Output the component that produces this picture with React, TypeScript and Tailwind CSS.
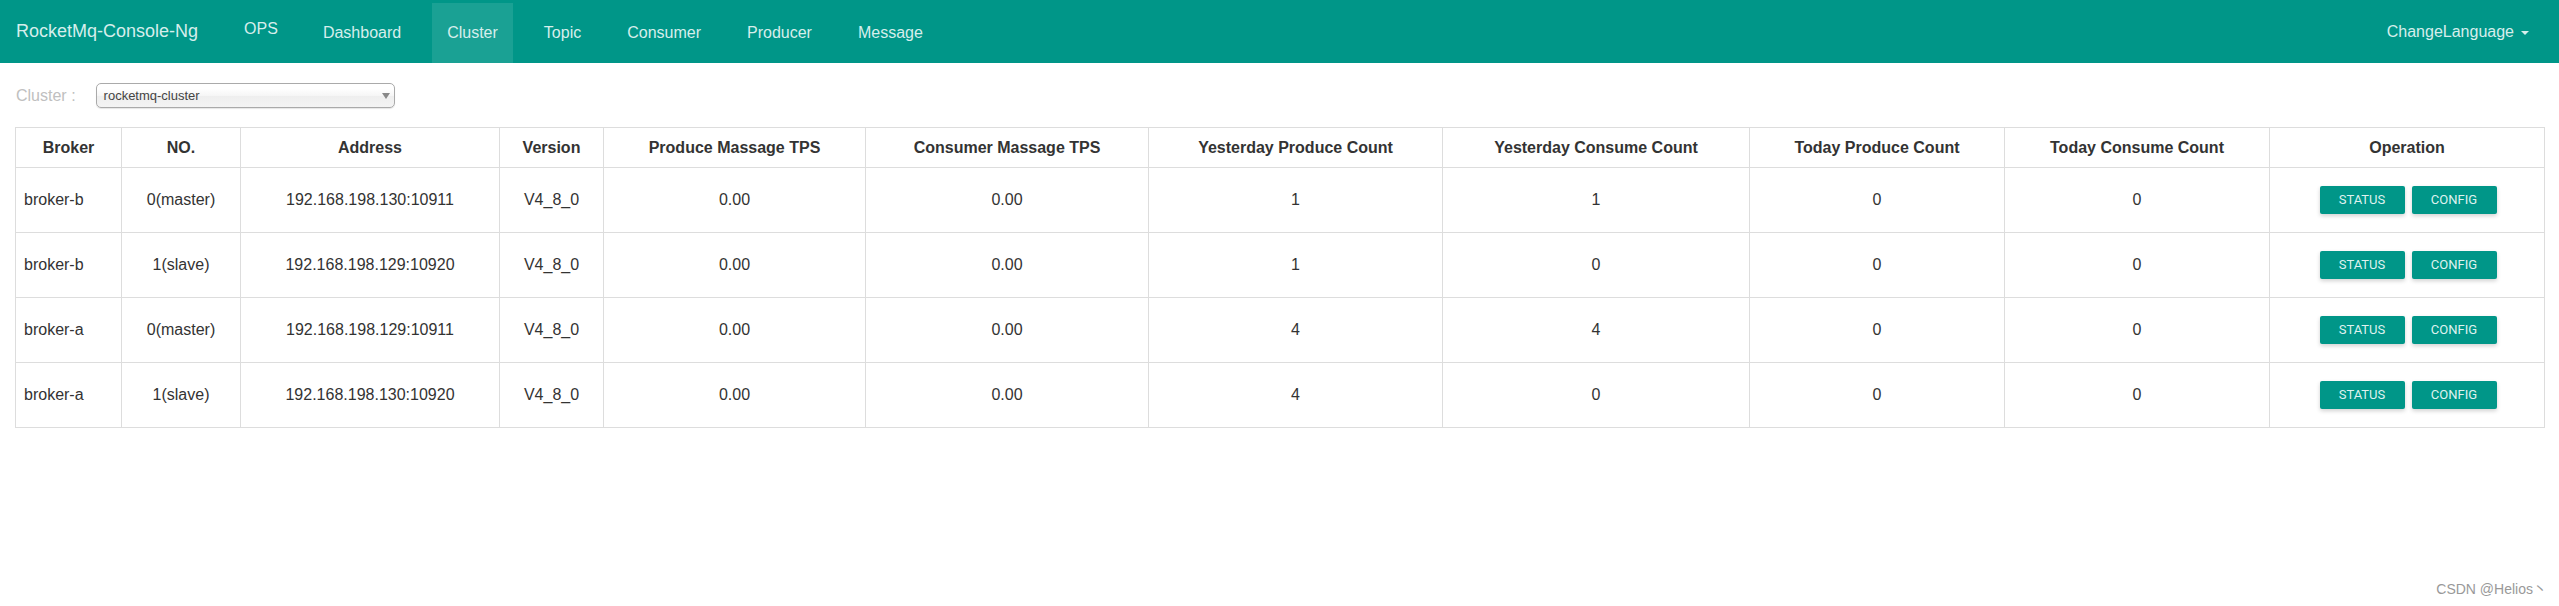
import React from "react";

type BrokerRow = {
  broker: string;
  no: string;
  address: string;
  version: string;
  produceTps: string;
  consumeTps: string;
  yesterdayProduce: number;
  yesterdayConsume: number;
  todayProduce: number;
  todayConsume: number;
};

const rows: BrokerRow[] = [
  {
    broker: "broker-b",
    no: "0(master)",
    address: "192.168.198.130:10911",
    version: "V4_8_0",
    produceTps: "0.00",
    consumeTps: "0.00",
    yesterdayProduce: 1,
    yesterdayConsume: 1,
    todayProduce: 0,
    todayConsume: 0,
  },
  {
    broker: "broker-b",
    no: "1(slave)",
    address: "192.168.198.129:10920",
    version: "V4_8_0",
    produceTps: "0.00",
    consumeTps: "0.00",
    yesterdayProduce: 1,
    yesterdayConsume: 0,
    todayProduce: 0,
    todayConsume: 0,
  },
  {
    broker: "broker-a",
    no: "0(master)",
    address: "192.168.198.129:10911",
    version: "V4_8_0",
    produceTps: "0.00",
    consumeTps: "0.00",
    yesterdayProduce: 4,
    yesterdayConsume: 4,
    todayProduce: 0,
    todayConsume: 0,
  },
  {
    broker: "broker-a",
    no: "1(slave)",
    address: "192.168.198.130:10920",
    version: "V4_8_0",
    produceTps: "0.00",
    consumeTps: "0.00",
    yesterdayProduce: 4,
    yesterdayConsume: 0,
    todayProduce: 0,
    todayConsume: 0,
  },
];

const columns = [
  { title: "Broker", width: "w-[106px]" },
  { title: "NO.", width: "w-[119px]" },
  { title: "Address", width: "w-[259px]" },
  { title: "Version", width: "w-[104px]" },
  { title: "Produce Massage TPS", width: "w-[262px]" },
  { title: "Consumer Massage TPS", width: "w-[283px]" },
  { title: "Yesterday Produce Count", width: "w-[294px]" },
  { title: "Yesterday Consume Count", width: "w-[307px]" },
  { title: "Today Produce Count", width: "w-[255px]" },
  { title: "Today Consume Count", width: "w-[265px]" },
  { title: "Operation", width: "w-[275px]" },
];

const navLinks = ["Dashboard", "Cluster", "Topic", "Consumer", "Producer", "Message"];

function NavBar() {
  return (
    <nav className="flex h-[63px] items-stretch bg-[#009688] pl-4 pr-[15px] text-[#d6eeec]">
      <a className="flex items-center text-[18px]">RocketMq-Console-Ng</a>
      <a className="ml-[46px] flex items-center pb-[6px] text-[16px]">OPS</a>
      <ul className="ml-[30px] flex items-stretch gap-4 text-[16px]">
        {navLinks.map((link) => (
          <li key={link} className="flex">
            <a
              className={
                link === "Cluster"
                  ? "mt-[3px] flex items-center bg-white/10 px-[15px]"
                  : "mt-[3px] flex items-center px-[15px]"
              }
            >
              {link}
            </a>
          </li>
        ))}
      </ul>
      <a className="ml-auto flex items-center px-[15px] text-[16px]">
        ChangeLanguage
        <span className="ml-[7px] mt-[2px] inline-block h-0 w-0 border-x-4 border-t-4 border-x-transparent border-t-[#d6eeec]" />
      </a>
    </nav>
  );
}

function ClusterSelect() {
  return (
    <div className="mt-5 flex items-center">
      <label className="pl-px text-[16px] text-[#c0c0c0]">Cluster :</label>
      <div className="ml-[20px] flex h-[25px] w-[299px] items-center justify-between rounded-[5px] border border-[#aaa] bg-[linear-gradient(#fff_20%,#f6f6f6_50%,#eee_52%,#f4f4f4_100%)] pl-[7px] pr-[4px] shadow-[0_1px_1px_rgba(0,0,0,0.1)]">
        <span className="text-[13px] text-[#444]">rocketmq-cluster</span>
        <span className="h-0 w-0 border-x-4 border-t-[6px] border-x-transparent border-t-[#888]" />
      </div>
    </div>
  );
}

function OpButton({ label }: { label: string }) {
  return (
    <button className="h-[28px] w-[85px] rounded-[2px] bg-[#009688] font-['Roboto',sans-serif] text-[13px] text-[#dff2ef] shadow-[0_2px_4px_rgba(0,0,0,0.18)]">
      {label}
    </button>
  );
}

function BrokerTable() {
  const cell = "border border-[#ddd] h-[65px] px-2 text-center align-middle";
  return (
    <table className="mt-[19px] w-full table-fixed border-collapse border border-[#ddd] text-[16px] text-[#333]">
      <colgroup>
        {columns.map((c) => (
          <col key={c.title} className={c.width} />
        ))}
      </colgroup>
      <thead>
        <tr>
          {columns.map((c) => (
            <th
              key={c.title}
              className="h-[40px] border border-[#ddd] px-2 text-center align-middle font-bold"
            >
              {c.title}
            </th>
          ))}
        </tr>
      </thead>
      <tbody>
        {rows.map((r, i) => (
          <tr key={i}>
            <td className="h-[65px] border border-[#ddd] px-2 text-left align-middle">
              {r.broker}
            </td>
            <td className={cell}>{r.no}</td>
            <td className={cell}>{r.address}</td>
            <td className={cell}>{r.version}</td>
            <td className={cell}>{r.produceTps}</td>
            <td className={cell}>{r.consumeTps}</td>
            <td className={cell}>{r.yesterdayProduce}</td>
            <td className={cell}>{r.yesterdayConsume}</td>
            <td className={cell}>{r.todayProduce}</td>
            <td className={cell}>{r.todayConsume}</td>
            <td className={cell}>
              <div className="flex justify-center gap-[7px] pl-[2px]">
                <OpButton label="STATUS" />
                <OpButton label="CONFIG" />
              </div>
            </td>
          </tr>
        ))}
      </tbody>
    </table>
  );
}

export default function App() {
  return (
    <div className="flex min-h-[606px] flex-col bg-white font-['Liberation_Sans','Noto_Sans_CJK_SC',Arial,sans-serif]">
      <NavBar />
      <main className="px-[15px]">
        <ClusterSelect />
        <BrokerTable />
      </main>
      <footer className="mt-auto self-end pb-[6px] pr-[12px] text-[14px] text-[#999]">
        CSDN @Helios丶
      </footer>
    </div>
  );
}
